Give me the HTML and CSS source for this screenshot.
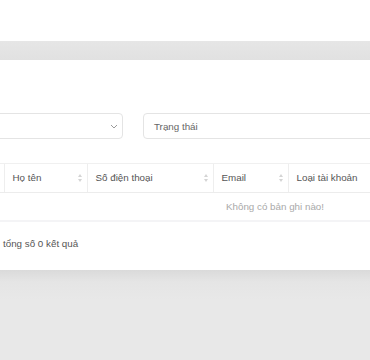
FILE: index.html
```html
<!DOCTYPE html>
<html lang="vi">
<head>
<meta charset="utf-8">
<link rel="stylesheet" href="styles.css">
</head>
<body>
<div class="top"></div>
<div class="band"></div>
<div class="card">
  <div class="filters">
    <div class="select">
      <svg class="chev" width="8" height="5" viewBox="0 0 8 5"><path d="M1 1 L4 4 L7 1" fill="none" stroke="#9a9a9a" stroke-width="1"/></svg>
    </div>
    <div class="input">Trạng thái</div>
  </div>
  <table class="grid">
    <thead>
      <tr>
        <th class="c0"><span class="sort"></span></th>
        <th class="c1">Họ tên<span class="sort"></span></th>
        <th class="c2">Số điện thoại<span class="sort"></span></th>
        <th class="c3">Email<span class="sort"></span></th>
        <th class="c4">Loại tài khoản</th>
      </tr>
    </thead>
    <tbody>
      <tr><td colspan="5" class="empty">Không có bản ghi nào!</td></tr>
    </tbody>
  </table>
  <div class="total">tổng số 0 kết quả</div>
</div>
<div class="bottom"></div>
</body>
</html>
```
FILE: styles.css
```css
html, body { margin: 0; padding: 0; }
body {
  width: 370px; height: 360px; overflow: hidden;
  background: #e8e8e8;
  font-family: "Liberation Sans", Arial, sans-serif;
  font-size: 9.8px;
  color: #555;
}
.top { height: 41px; background: #fff; }
.band { height: 19px; background: linear-gradient(#e6e6e6, #e1e1e1); }
.card { height: 210px; background: #fff; overflow: hidden; }
.filters {
  display: flex; gap: 20px;
  margin-left: -40px; padding-top: 53px;
}
.select, .input {
  border: 1px solid #e4e4e4; border-radius: 4px;
  box-sizing: border-box; height: 26px; background: #fff;
}
.select { width: 163px; flex: none; display: flex; align-items: center; justify-content: flex-end; padding-right: 4px; }
.chev { display: block; }
.input { width: 300px; flex: none; display: flex; align-items: center; padding-left: 10px; color: #666; }
.grid {
  margin-top: 24px; margin-left: -40px;
  width: 630px; border-collapse: collapse; table-layout: fixed;
}
.grid th {
  height: 29px; box-sizing: border-box; padding: 0 0 1px 8px;
  text-align: left; font-weight: normal; color: #555;
  background: #fff;
  border-top: 1px solid #f0f0f0;
  border-bottom: 1px solid #ececec;
  border-left: 1px solid #eeeeee;
  position: relative;
}
.grid th.c0 { border-left: none; }
.c0 { width: 44px; }
.c1 { width: 83px; }
.c2 { width: 126px; }
.c3 { width: 75px; }
.c4 { width: 302px; }
.sort {
  position: absolute; right: 4px; top: 10px;
  width: 5px; height: 8px;
}
.sort::before, .sort::after {
  content: ""; position: absolute; left: 0;
  border-left: 2.5px solid transparent; border-right: 2.5px solid transparent;
}
.sort::before { top: 0; border-bottom: 3px solid #d4d4d4; }
.sort::after { bottom: 0; border-top: 3px solid #d4d4d4; }
.empty {
  height: 28px; box-sizing: border-box; text-align: center;
  color: #a9a9a9; padding: 0;
  border-bottom: 2px solid #f4f4f6;
}
.total { padding: 16px 0 0 3px; color: #555; }
.bottom {
  height: 90px;
  background: linear-gradient(#dadada, #e5e5e5 12px, #e8e8e8 30px);
}
```
